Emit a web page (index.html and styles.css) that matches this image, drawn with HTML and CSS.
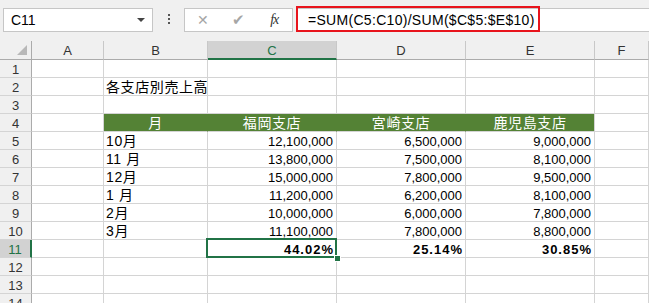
FILE: index.html
```html
<!DOCTYPE html>
<html lang="ja">
<head>
    <meta charset="UTF-8">
    <title>各支店別売上高</title>
    <link rel="stylesheet" href="styles.css">
</head>
<body>
    <!-- Formula Bar -->
    <div class="formula-bar">
        <div class="name-box">
            <span>C11</span>
            <span class="arrow"></span>
        </div>
        <div class="dots"><i></i><i></i><i></i></div>
        <div class="fx-box">
            <span class="btn-x">&#x2715;</span>
            <span class="btn-ok">&#x2714;</span>
            <span class="btn-fx">fx</span>
        </div>
        <div class="formula-input">
            <span>=SUM(C5:C10)/SUM($C$5:$E$10)</span>
            <div class="mark"></div>
        </div>
    </div>

    <!-- Sheet -->
    <div class="sheet">
        <div class="ch corner"></div>
        <div class="ch">A</div>
        <div class="ch">B</div>
        <div class="ch active">C</div>
        <div class="ch">D</div>
        <div class="ch">E</div>
        <div class="ch">F</div>

        <div class="rh">1</div><div class="c"></div><div class="c"></div><div class="c"></div><div class="c"></div><div class="c"></div><div class="c"></div>
        <div class="rh">2</div><div class="c"></div><div class="c jp">各支店別売上高</div><div class="c"></div><div class="c"></div><div class="c"></div><div class="c"></div>
        <div class="rh">3</div><div class="c"></div><div class="c"></div><div class="c"></div><div class="c"></div><div class="c"></div><div class="c"></div>
        <div class="rh">4</div><div class="c"></div><div class="c hd">月</div><div class="c hd">福岡支店</div><div class="c hd">宮崎支店</div><div class="c hd last">鹿児島支店</div><div class="c"></div>
        <div class="rh">5</div><div class="c"></div><div class="c jp">10月</div><div class="c n">12,100,000</div><div class="c n">6,500,000</div><div class="c n">9,000,000</div><div class="c"></div>
        <div class="rh">6</div><div class="c"></div><div class="c jp">11 月</div><div class="c n">13,800,000</div><div class="c n">7,500,000</div><div class="c n">8,100,000</div><div class="c"></div>
        <div class="rh">7</div><div class="c"></div><div class="c jp">12月</div><div class="c n">15,000,000</div><div class="c n">7,800,000</div><div class="c n">9,500,000</div><div class="c"></div>
        <div class="rh">8</div><div class="c"></div><div class="c jp">1 月</div><div class="c n">11,200,000</div><div class="c n">6,200,000</div><div class="c n">8,100,000</div><div class="c"></div>
        <div class="rh">9</div><div class="c"></div><div class="c jp">2月</div><div class="c n">10,000,000</div><div class="c n">6,000,000</div><div class="c n">7,800,000</div><div class="c"></div>
        <div class="rh">10</div><div class="c"></div><div class="c jp">3月</div><div class="c n">11,100,000</div><div class="c n">7,800,000</div><div class="c n">8,800,000</div><div class="c"></div>
        <div class="rh active">11</div><div class="c"></div><div class="c"></div><div class="c n pct sel">44.02%</div><div class="c n pct">25.14%</div><div class="c n pct">30.85%</div><div class="c"></div>
        <div class="rh">12</div><div class="c"></div><div class="c"></div><div class="c"></div><div class="c"></div><div class="c"></div><div class="c"></div>
        <div class="rh">13</div><div class="c"></div><div class="c"></div><div class="c"></div><div class="c"></div><div class="c"></div><div class="c"></div>
        <div class="rh">14</div><div class="c"></div><div class="c"></div><div class="c"></div><div class="c"></div><div class="c"></div><div class="c"></div>
    </div>
</body>
</html>
```

FILE: styles.css
```css
/* Reset */
* {
    box-sizing: border-box;
    margin: 0;
    padding: 0;
}

body {
    font-family: "Liberation Sans", "Noto Sans CJK JP", sans-serif;
    font-size: 13px;
    color: #000;
    background-color: #f0f0f0;
    width: 649px;
    height: 303px;
    overflow: hidden;
}

/* Formula Bar */
.formula-bar {
    display: flex;
    align-items: flex-start;
    height: 41px;
    padding-top: 8px;
}

.name-box {
    display: flex;
    align-items: center;
    justify-content: space-between;
    width: 150px;
    height: 24px;
    margin-left: 3px;
    padding: 0 7px 0 7px;
    background-color: #fff;
    border: 1px solid #c6c6c6;
    font-size: 14px;
}

.name-box .arrow {
    width: 0;
    height: 0;
    border-left: 4px solid transparent;
    border-right: 4px solid transparent;
    border-top: 4px solid #444;
}

.dots {
    display: flex;
    flex-direction: column;
    align-items: center;
    gap: 2px;
    width: 31px;
    padding-top: 6px;
}

.dots i {
    display: block;
    width: 2px;
    height: 2px;
    background-color: #555;
}

.fx-box {
    display: flex;
    align-items: center;
    width: 109px;
    height: 24px;
    background-color: #fff;
    border: 1px solid #c6c6c6;
}

.fx-box span {
    flex: 1;
    text-align: center;
}

.btn-x {
    color: #a6a6a6;
    font-size: 14px;
}

.btn-ok {
    color: #a6a6a6;
    font-size: 15px;
}

.btn-fx {
    font-family: "Liberation Serif", serif;
    font-style: italic;
    font-size: 14px;
    color: #333;
    letter-spacing: -1px;
}

.formula-input {
    position: relative;
    flex: 1;
    height: 24px;
    margin-left: 3px;
    padding: 3px 0 0 11px;
    background-color: #fff;
    border: 1px solid #c6c6c6;
    border-right: none;
    font-size: 14px;
    letter-spacing: 0.3px;
}

.mark {
    position: absolute;
    left: -1px;
    top: -3px;
    width: 244px;
    height: 26px;
    border: 2px solid #e8141c;
}

/* Sheet */
.sheet {
    display: grid;
    grid-template-columns: 32px 72px 104px 129px 129px 129px 1fr;
    grid-template-rows: 19px;
    grid-auto-rows: 18px;
    background-color: #fff;
}

.ch {
    display: flex;
    align-items: center;
    justify-content: center;
    background-color: #f0f0f0;
    border-right: 1px solid #c8c8c8;
    border-bottom: 1px solid #ababab;
    color: #333;
    font-size: 13px;
    padding-top: 1px;
}

.ch.corner {
    position: relative;
    border-right-color: #ababab;
}

.ch.corner::after {
    content: "";
    position: absolute;
    right: 4px;
    bottom: 4px;
    width: 0;
    height: 0;
    border-left: 10px solid transparent;
    border-bottom: 10px solid #b8b8b8;
}

.ch.active {
    background-color: #d2d2d2;
    color: #217346;
    border-bottom: 2px solid #217346;
}

.rh {
    display: flex;
    align-items: flex-end;
    justify-content: center;
    background-color: #f0f0f0;
    border-right: 1px solid #ababab;
    border-bottom: 1px solid #d4d4d4;
    color: #333;
    line-height: 15px;
    padding-bottom: 0;
}

.rh.active {
    background-color: #d2d2d2;
    color: #217346;
    border-right: 2px solid #217346;
}

.c {
    display: flex;
    align-items: flex-end;
    border-right: 1px solid #d4d4d4;
    border-bottom: 1px solid #d4d4d4;
    padding: 0 2px;
    line-height: 15px;
    white-space: nowrap;
}

.jp {
    font-size: 14px;
    letter-spacing: 0.6px;
}

.hd {
    justify-content: center;
    background-color: #548235;
    border-right-color: #548235;
    color: #fff;
    font-size: 14px;
    letter-spacing: 0.6px;
}

.hd.last {
    border-right-color: #d4d4d4;
}

.n {
    justify-content: flex-end;
    padding-right: 3px;
}

.pct {
    font-weight: bold;
    letter-spacing: 1px;
    padding-right: 2px;
}

/* Selected Cell */
.sel {
    position: relative;
}

.sel::after {
    content: "";
    position: absolute;
    left: -2px;
    top: -2px;
    right: -1px;
    bottom: -1px;
    border: 2px solid #217346;
}

.sel::before {
    content: "";
    position: absolute;
    right: -4px;
    bottom: -4px;
    width: 5px;
    height: 5px;
    background-color: #217346;
    outline: 1px solid #fff;
    z-index: 1;
}
```
